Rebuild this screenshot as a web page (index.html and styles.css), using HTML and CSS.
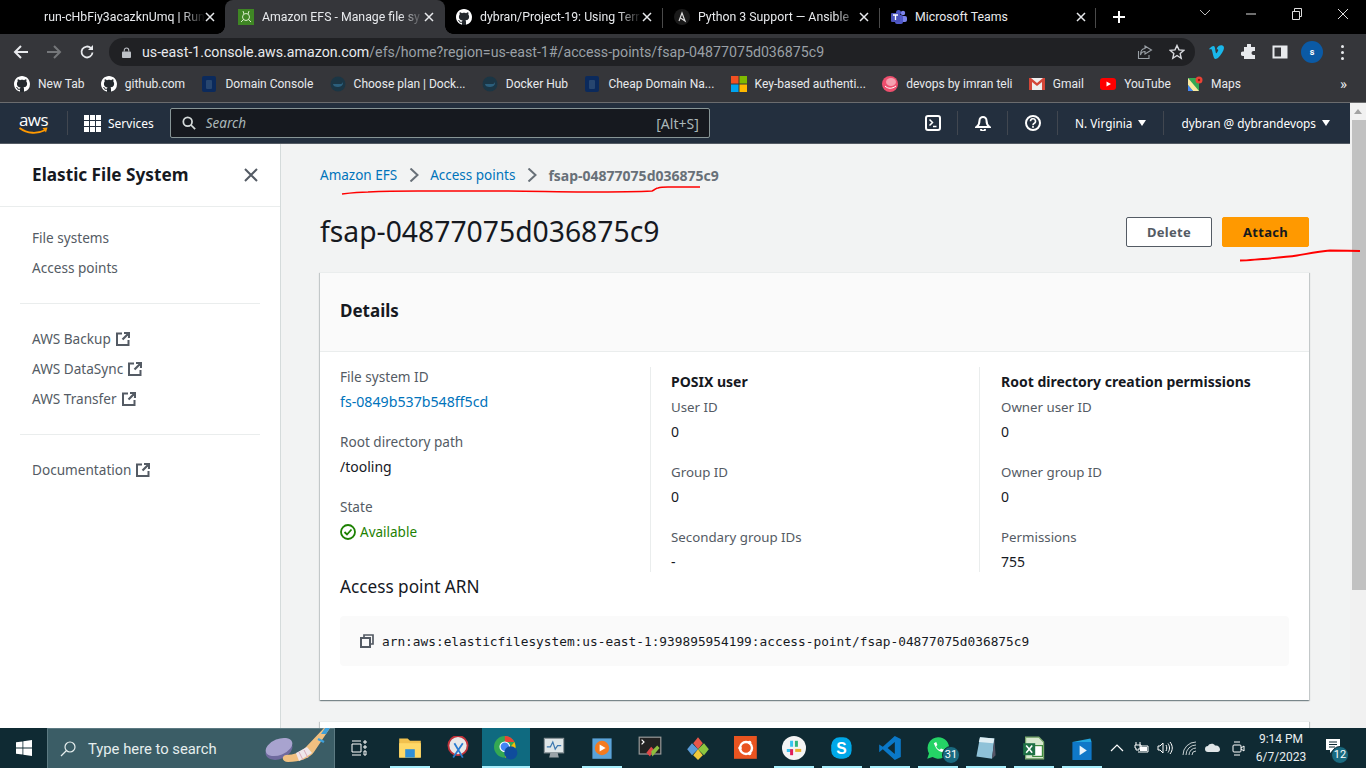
FILE: index.html
```html
<!DOCTYPE html>
<html lang="en">
<head>
    <meta charset="UTF-8">
    <meta name="viewport" content="width=device-width, initial-scale=1.0">
    <title>Amazon EFS - Manage file systems</title>
    <link rel="stylesheet" href="styles.css">
</head>
<body>
    <svg class="sprites" width="0" height="0">
        <symbol id="gh" viewBox="0 0 16 16">
            <circle cx="8" cy="8" r="8" fill="#24292e"/>
            <path fill="#fff" d="M8 0C3.58 0 0 3.58 0 8c0 3.54 2.29 6.53 5.47 7.59.4.07.55-.17.55-.38 0-.19-.01-.82-.01-1.49-2.01.37-2.53-.49-2.69-.94-.09-.23-.48-.94-.82-1.13-.28-.15-.68-.52-.01-.53.63-.01 1.08.58 1.23.82.72 1.21 1.87.87 2.33.66.07-.52.28-.87.51-1.07-1.78-.2-3.64-.89-3.64-3.95 0-.87.31-1.59.82-2.15-.08-.2-.36-1.02.08-2.12 0 0 .67-.21 2.2.82.64-.18 1.32-.27 2-.27.68 0 1.36.09 2 .27 1.53-1.04 2.2-.82 2.2-.82.44 1.1.16 1.92.08 2.12.51.56.82 1.27.82 2.15 0 3.07-1.87 3.75-3.65 3.95.29.25.54.73.54 1.48 0 1.07-.01 1.93-.01 2.2 0 .21.15.46.55.38A8.013 8.013 0 0016 8c0-4.42-3.58-8-8-8z"/>
        </symbol>
        <symbol id="x" viewBox="0 0 10 10">
            <path d="M1 1l8 8M9 1L1 9" stroke="currentColor" stroke-width="1.5" fill="none"/>
        </symbol>
        <symbol id="ext" viewBox="0 0 14 14">
            <path d="M6 1.500H1V13h11.500V8" stroke="#545b64" stroke-width="2" fill="none"/>
            <path d="M8 1h5v5M13 1L6.500 7.500" stroke="#545b64" stroke-width="2.200" fill="none"/>
        </symbol>
        <symbol id="ncheap" viewBox="0 0 16 16">
            <rect x="1" y="0" width="14" height="16" rx="2" fill="#0b2a5c"/>
            <rect x="5" y="4" width="6" height="9" rx="1" fill="#27466f"/>
        </symbol>
        <symbol id="docker" viewBox="0 0 16 16">
            <circle cx="8" cy="8" r="7.500" fill="#1b3645"/>
            <path d="M3 8h8c1 0 1.500-1 2-2 .5 2-1 5-5 5-3 0-5-1-5-3z" fill="#2c5f7c"/>
        </symbol>
    </svg>

    <div class="tabstrip">
        <div class="tab">
            <span class="tab-title">run-cHbFiy3acazknUmq | Run</span>
            <svg class="tab-close"><use href="#x"/></svg>
        </div>
        <div class="tab active">
            <svg class="tab-icon" viewBox="0 0 16 16">
                <rect width="16" height="16" fill="#3f8624"/>
                <circle cx="8" cy="8" r="3.500" fill="none" stroke="#d6ecc8" stroke-width="1"/>
                <path d="M5 2l1 3M11 2l-1 3M3 13l3-3M13 13l-3-3" stroke="#d6ecc8" stroke-width="1"/>
            </svg>
            <span class="tab-title">Amazon EFS - Manage file sy</span>
            <svg class="tab-close"><use href="#x"/></svg>
        </div>
        <div class="tab after-active">
            <svg class="tab-icon"><use href="#gh"/></svg>
            <span class="tab-title">dybran/Project-19: Using Terr</span>
            <svg class="tab-close"><use href="#x"/></svg>
        </div>
        <div class="tab sep">
            <svg class="tab-icon" viewBox="0 0 16 16">
                <circle cx="8" cy="8" r="8" fill="#1a1a1a"/>
                <path d="M5 12L8 4l3 8-4.500-3" stroke="#ddd" stroke-width="1.200" fill="none"/>
            </svg>
            <span class="tab-title">Python 3 Support — Ansible</span>
            <svg class="tab-close"><use href="#x"/></svg>
        </div>
        <div class="tab sep last">
            <svg class="tab-icon" viewBox="0 0 16 16">
                <circle cx="12" cy="4" r="2.200" fill="#7b83eb"/>
                <rect x="9" y="7" width="7" height="6" rx="2" fill="#7b83eb"/>
                <circle cx="7.500" cy="3.500" r="2.500" fill="#5059c9"/>
                <rect x="4" y="6" width="8" height="9" rx="2" fill="#5059c9"/>
                <rect x="0" y="4" width="9" height="9" rx="1" fill="#4b53bc"/>
                <path d="M2 6h5M4.500 6v5" stroke="#fff" stroke-width="1.300"/>
            </svg>
            <span class="tab-title plain">Microsoft Teams</span>
            <svg class="tab-close"><use href="#x"/></svg>
        </div>
        <svg class="new-tab" viewBox="0 0 12 12"><path d="M6 0v12M0 6h12" stroke="#fff" stroke-width="2"/></svg>
        <div class="win-controls">
            <svg viewBox="0 0 46 20"><path d="M18 6l5 5 5-5" stroke="#bbb" fill="none"/></svg>
            <svg viewBox="0 0 46 20"><path d="M18 10h10" stroke="#ddd" fill="none"/></svg>
            <svg viewBox="0 0 46 20"><path d="M18.500 7.500h7v8h-7zM20.500 7.500v-3h7v8h-2" stroke="#ddd" fill="none"/></svg>
            <svg viewBox="0 0 46 20"><path d="M18 5l10 10M28 5L18 15" stroke="#ddd" fill="none"/></svg>
        </div>
    </div>

    <div class="toolbar">
        <svg class="tool-btn" viewBox="0 0 16 16"><path d="M15 8H2M8 2L2 8l6 6" stroke="#e8eaed" stroke-width="2" fill="none"/></svg>
        <svg class="tool-btn" viewBox="0 0 16 16"><path d="M1 8h13M8 2l6 6-6 6" stroke="#75777a" stroke-width="2" fill="none"/></svg>
        <svg class="tool-btn" viewBox="0 0 16 16"><path d="M13.500 8.500A5.500 5.500 0 1 1 12 4.200" stroke="#e8eaed" stroke-width="1.800" fill="none"/><path d="M14 1v5H9z" fill="#e8eaed"/></svg>
        <div class="omnibox">
            <svg class="lock" viewBox="0 0 10 12"><path d="M2.500 5V3.500a2.500 2.500 0 0 1 5 0V5" stroke="#bdc1c6" fill="none" stroke-width="1.200"/><rect y="5" width="10" height="7" rx="1" fill="#bdc1c6"/></svg>
            <span class="url"><span class="host">us-east-1.console.aws.amazon.com</span>/efs/home?region=us-east-1#/access-points/fsap-04877075d036875c9</span>
            <svg class="omni-icon" viewBox="0 0 16 16"><path d="M1.500 7v7.500H12V11M8 2v0l6.500 4L8 10V7.500C5.500 7.500 4 9 3.500 11 3.500 7 5 4.500 8 4.500z" stroke="#9aa0a6" fill="none" stroke-width="1.100"/></svg>
            <svg class="omni-icon" viewBox="0 0 16 16"><path d="M8 1.500l2 4.400 4.700.5-3.500 3.200 1 4.700L8 11.500l-4.200 2.800 1-4.700L1.300 6.400 6 5.900z" stroke="#dadce0" fill="none" stroke-width="1.400"/></svg>
        </div>
        <svg class="ext-icon" viewBox="0 0 16 16"><path d="M0 5c2-2 3-3 4.500-3 2 0 1.500 5 2.500 7 .5 1 1-.5 2-2 .7-1.500-.5-2-1.500-1.500C8.500 2 11 .8 13.500 1.500 16 2.500 15 6 13 9c-2 3-4.500 6-6.500 6S4 10 3 6.500C2.500 5 2 4.500 1 5.500z" fill="#1ab7ea"/></svg>
        <svg class="ext-icon" viewBox="0 0 16 16"><path d="M6 1a2 2 0 0 1 4 0v2h4v4h-1.500a2 2 0 0 0 0 4H14v4H3v-3H2a2.200 2.200 0 0 1 0-4.500h1V3h3z" fill="#e8eaed"/></svg>
        <svg class="ext-icon" viewBox="0 0 16 16"><path d="M1.500 2.500h13v11h-13z" fill="none" stroke="#e8eaed" stroke-width="2"/><rect x="9" y="3" width="5" height="10" fill="#e8eaed"/></svg>
        <span class="avatar">s</span>
        <span class="kebab"><i></i><i></i><i></i></span>
    </div>

    <div class="bookmarks">
        <span class="bm"><svg class="bm-icon"><use href="#gh"/></svg>New Tab</span>
        <span class="bm"><svg class="bm-icon"><use href="#gh"/></svg>github.com</span>
        <span class="bm"><svg class="bm-icon"><use href="#ncheap"/></svg>Domain Console</span>
        <span class="bm"><svg class="bm-icon"><use href="#docker"/></svg>Choose plan | Dock...</span>
        <span class="bm"><svg class="bm-icon"><use href="#docker"/></svg>Docker Hub</span>
        <span class="bm"><svg class="bm-icon"><use href="#ncheap"/></svg>Cheap Domain Na...</span>
        <span class="bm"><svg class="bm-icon" viewBox="0 0 16 16"><rect width="7.500" height="7.500" fill="#f25022"/><rect x="8.500" width="7.500" height="7.500" fill="#7fba00"/><rect y="8.500" width="7.500" height="7.500" fill="#00a4ef"/><rect x="8.500" y="8.500" width="7.500" height="7.500" fill="#ffb900"/></svg>Key-based authenti...</span>
        <span class="bm"><svg class="bm-icon" viewBox="0 0 16 16"><circle cx="8" cy="8" r="8" fill="#ef4f6e"/><ellipse cx="9" cy="6" rx="5" ry="4" fill="#f6a0b0"/><path d="M3 10c3 3 7 3 11 0" stroke="#fff" fill="none"/></svg>devops by imran teli</span>
        <span class="bm"><svg class="bm-icon" viewBox="0 0 16 16"><rect y="2" width="16" height="12" fill="#eee"/><path d="M0 2v12h3V6l5 4 5-4v8h3V2h-2L8 7 2 2z" fill="#d44638"/></svg>Gmail</span>
        <span class="bm"><svg class="bm-icon" viewBox="0 0 16 16"><rect y="2" width="16" height="12" rx="3" fill="#f00"/><path d="M6.500 5.500v5L11 8z" fill="#fff"/></svg>YouTube</span>
        <span class="bm"><svg class="bm-icon" viewBox="0 0 16 16"><path d="M1 2h11v13H1z" fill="#34a853"/><path d="M1 2l11 13H6L1 9z" fill="#fbe9a0"/><path d="M1 9l5 6H1z" fill="#4285f4"/><circle cx="12" cy="4" r="3.500" fill="#ea4335"/><circle cx="12" cy="4" r="1.200" fill="#8e1a10"/></svg>Maps</span>
        <span class="bm-more">»</span>
    </div>

    <div class="viewport">
        <div class="console">
            <nav class="awsbar">
                <div class="aws-logo">
                    <span>aws</span>
                    <svg viewBox="0 0 30 8"><path d="M1 1c8 6 18 6 26 2" stroke="#f90" stroke-width="1.800" fill="none"/><path d="M24 1l5-.5-1.500 5z" fill="#f90"/></svg>
                </div>
                <span class="nav-sep first"></span>
                <span class="grid-icon"><i></i><i></i><i></i><i></i><i></i><i></i><i></i><i></i><i></i></span>
                <span class="nav-label services">Services</span>
                <div class="search">
                    <svg viewBox="0 0 16 16"><circle cx="6.500" cy="6.500" r="5" stroke="#d5dbdb" stroke-width="2" fill="none"/><path d="M10 10l5 5" stroke="#d5dbdb" stroke-width="2"/></svg>
                    <span class="search-text">Search</span>
                    <span class="search-key">[Alt+S]</span>
                </div>
                <div class="nav-right">
                    <span class="nav-item"><svg viewBox="0 0 16 16"><rect x="1" y="1" width="14" height="14" rx="2" stroke="#fff" stroke-width="2" fill="none"/><path d="M4.500 4.500l3 3-3 3M8 11.500h3.500" stroke="#fff" stroke-width="1.500" fill="none"/></svg></span>
                    <span class="nav-item"><svg viewBox="0 0 16 16"><path d="M8 2a3.500 3.500 0 0 0-3.500 3.500c0 3-1 5-3 6.500h13c-2-1.500-3-3.500-3-6.500A3.500 3.500 0 0 0 8 2zM6 14a2 2 0 0 0 4 0" stroke="#fff" stroke-width="2" fill="none"/></svg></span>
                    <span class="nav-item"><svg viewBox="0 0 16 16"><circle cx="8" cy="8" r="7" stroke="#fff" stroke-width="2" fill="none"/><path d="M5.500 6.200a2.500 2.500 0 1 1 3.500 2.300c-.7.400-1 .8-1 1.700" stroke="#fff" stroke-width="1.600" fill="none"/><rect x="7.200" y="11" width="1.600" height="1.800" fill="#fff"/></svg></span>
                    <span class="nav-item text region">N. Virginia<i class="caret"></i></span>
                    <span class="nav-item text account">dybran @ dybrandevops<i class="caret"></i></span>
                </div>
            </nav>

            <div class="layout">
                <aside class="sidenav">
                    <div class="side-head">
                        <h2>Elastic File System</h2>
                        <svg class="side-close" viewBox="0 0 14 14"><path d="M1 1l12 12M13 1L1 13" stroke="#545b64" stroke-width="2"/></svg>
                    </div>
                    <ul class="side-list top">
                        <li>File systems</li>
                        <li>Access points</li>
                    </ul>
                    <hr class="side-div">
                    <ul class="side-list">
                        <li>AWS Backup<svg class="ext"><use href="#ext"/></svg></li>
                        <li>AWS DataSync<svg class="ext"><use href="#ext"/></svg></li>
                        <li>AWS Transfer<svg class="ext"><use href="#ext"/></svg></li>
                    </ul>
                    <hr class="side-div">
                    <ul class="side-list">
                        <li>Documentation<svg class="ext"><use href="#ext"/></svg></li>
                    </ul>
                </aside>

                <main class="content">
                    <div class="crumbs">
                        <a>Amazon EFS</a>
                        <svg viewBox="0 0 10 14"><path d="M1.500.5l7 6.500-7 6.500" stroke="#687078" stroke-width="2" fill="none"/></svg>
                        <a>Access points</a>
                        <svg viewBox="0 0 10 14"><path d="M1.500.5l7 6.500-7 6.500" stroke="#687078" stroke-width="2" fill="none"/></svg>
                        <strong>fsap-04877075d036875c9</strong>
                    </div>
                    <div class="page-head">
                        <h1>fsap-04877075d036875c9</h1>
                        <div class="actions">
                            <button class="btn">Delete</button>
                            <button class="btn primary">Attach</button>
                        </div>
                    </div>
                    <section class="card">
                        <h2 class="card-head">Details</h2>
                        <div class="card-body">
                            <div class="columns">
                                <div class="col">
                                    <div class="field"><span>File system ID</span><a>fs-0849b537b548ff5cd</a></div>
                                    <div class="field"><span>Root directory path</span><b>/tooling</b></div>
                                    <div class="field"><span>State</span>
                                        <em class="status"><svg viewBox="0 0 16 16"><circle cx="8" cy="8" r="7" stroke="#1d8102" stroke-width="1.800" fill="none"/><path d="M4.500 8l2.500 2.500 4.500-5" stroke="#1d8102" stroke-width="1.800" fill="none"/></svg>Available</em>
                                    </div>
                                </div>
                                <div class="col titled">
                                    <h3>POSIX user</h3>
                                    <div class="field"><span>User ID</span><b>0</b></div>
                                    <div class="field"><span>Group ID</span><b>0</b></div>
                                    <div class="field"><span>Secondary group IDs</span><b>-</b></div>
                                </div>
                                <div class="col titled">
                                    <h3>Root directory creation permissions</h3>
                                    <div class="field"><span>Owner user ID</span><b>0</b></div>
                                    <div class="field"><span>Owner group ID</span><b>0</b></div>
                                    <div class="field"><span>Permissions</span><b>755</b></div>
                                </div>
                            </div>
                            <h2 class="arn-title">Access point ARN</h2>
                            <div class="arn-box">
                                <svg viewBox="0 0 14 14"><path d="M4 4V1h9v9h-3" stroke="#545b64" stroke-width="1.700" fill="none"/><rect x="1" y="4" width="9" height="9" stroke="#545b64" stroke-width="2" fill="none"/></svg>
                                <code>arn:aws:elasticfilesystem:us-east-1:939895954199:access-point/fsap-04877075d036875c9</code>
                            </div>
                        </div>
                    </section>
                    <section class="card next"></section>
                </main>
            </div>
        </div>
        <div class="scrollbar">
            <span class="scroll-up"></span>
            <span class="scroll-thumb"></span>
        </div>
    </div>

    <div class="taskbar">
        <svg class="start" viewBox="0 0 16 16"><path d="M0 2.300l6.500-.9v6.200H0zM7.300 1.300L16 0v7.600H7.300zM0 8.400h6.500v6.200L0 13.700zM7.300 8.400H16V16l-8.700-1.200z" fill="#fff"/></svg>
        <div class="task-search">
            <svg viewBox="0 0 16 16"><circle cx="10" cy="6" r="5" stroke="#e6eeee" fill="none" stroke-width="1.200"/><path d="M6.500 9.500L1 15" stroke="#e6eeee" stroke-width="1.200"/></svg>
            <span>Type here to search</span>
            <svg class="hockey" viewBox="0 0 66 38">
                <ellipse cx="14" cy="22" rx="14" ry="9" transform="rotate(-22 14 22)" fill="#6f6a9e"/>
                <ellipse cx="14" cy="19" rx="14" ry="8" transform="rotate(-22 14 19)" fill="#a8a3cf"/>
                <path d="M59 0h6L49 24c-4 6-14 10-26 10-6 0-7-6-2-7 8 0 15-3 20-8z" fill="#f0c080"/>
                <path d="M31 25l11-6 5 6-13 8z" fill="#efe6ea"/>
                <path d="M34 24l4 8M39 22l4 8" stroke="#d9a8b8"/>
                <path d="M60 0h5l-4 6h-5z" fill="#3f9fd8"/>
                <path d="M53 11l6 3" stroke="#3f9fd8" stroke-width="2.500"/>
            </svg>
        </div>
        <svg class="task-view" viewBox="0 0 16 16"><path d="M1 1h9M1 15h9M1 4h9v8H1zM13 1h2v2h-2zM13 6h2v2h-2zM13 11h2v4h-2z" stroke="#fff" fill="none"/></svg>
        <div class="task-apps">
            <span class="task-app open"><svg viewBox="0 0 20 20"><path d="M1 2h7l2 2h9v14H1z" fill="#f2c14e"/><rect x="1" y="6" width="18" height="12" fill="#ffd968"/><rect x="6" y="11" width="8" height="7" fill="#2f8fd8"/></svg></span>
            <span class="task-app"><svg viewBox="0 0 20 20"><circle cx="10" cy="8" r="8" fill="#e8e8e8" stroke="#c0323a" stroke-width="1.500"/><path d="M6 18l8-12M14 18L7 6" stroke="#2a7bd0" stroke-width="1.500"/></svg></span>
            <span class="task-app open active"><svg viewBox="0 0 20 20"><circle cx="9" cy="9" r="9" fill="#34a853"/><path d="M9 0a9 9 0 0 1 8 5H9z" fill="#ea4335"/><path d="M17 5a9 9 0 0 1-8 13l4-8z" fill="#fbbc05"/><circle cx="9" cy="9" r="4" fill="#4285f4" stroke="#fff"/><circle cx="14" cy="14" r="5.500" fill="#0f4c9c"/></svg></span>
            <span class="task-app"><svg viewBox="0 0 20 20"><rect x="2" y="2" width="16" height="12" fill="#dfe6e8" stroke="#8a9499"/><path d="M4 9h3l2-4 2 6 2-3h3" stroke="#3c78b0" fill="none"/><path d="M7 14h6l1 4H6z" fill="#9aa3a8"/></svg></span>
            <span class="task-app open"><svg viewBox="0 0 20 20"><rect x="2" y="2" width="16" height="17" fill="#5ba3d9"/><circle cx="10" cy="10" r="6" fill="#f47b20"/><path d="M8 7v6l5-3z" fill="#fff"/></svg></span>
            <span class="task-app"><svg viewBox="0 0 20 20"><rect x="1" y="1" width="18" height="14" fill="#222" stroke="#999"/><path d="M3 3l2 2-2 2" stroke="#fff" fill="none"/><path d="M7 14l4-5 2 2-3 6z" fill="#e04848"/><path d="M12 17l6-7-2-2-5 5z" fill="#8dbf3f"/></svg></span>
            <span class="task-app"><svg viewBox="0 0 20 20"><path d="M10 1l4 5-4 5-4-5z" fill="#e8574a"/><path d="M5 6l5 5-5 5-4-5z" fill="#5a9bd8"/><path d="M15 6l4 5-4 5-5-5z" fill="#8dc63f"/><path d="M10 11l4 5-4 4-4-4z" fill="#f0c83c"/></svg></span>
            <span class="task-app"><svg viewBox="0 0 20 20"><rect width="19" height="19" fill="#e95420"/><circle cx="10" cy="10" r="5" fill="none" stroke="#fff" stroke-width="2"/><circle cx="5" cy="10" r="1.500" fill="#fff"/><circle cx="13" cy="5.500" r="1.500" fill="#fff"/><circle cx="13" cy="14.500" r="1.500" fill="#fff"/></svg></span>
            <span class="task-app open"><svg viewBox="0 0 20 20"><circle cx="10" cy="10" r="10" fill="#f4f4f4"/><path d="M8 4v5M4 12h5" stroke="#36c5f0" stroke-width="2.500"/><path d="M12 4v5" stroke="#2eb67d" stroke-width="2.500"/><path d="M11 12h5" stroke="#ecb22e" stroke-width="2.500"/><path d="M8 11v5" stroke="#e01e5a" stroke-width="2.500"/></svg></span>
            <span class="task-app open"><svg viewBox="0 0 20 20"><rect x="1" y="1" width="17" height="18" rx="7" fill="#00a8e8"/><text x="9.500" y="15" text-anchor="middle" font-size="13" font-family="Liberation Sans" font-weight="700" fill="#fff">S</text></svg></span>
            <span class="task-app open"><svg viewBox="0 0 20 20"><path d="M14 0l5 2.500v15L14 20 4 11l-3 2.500V7L4 9z" fill="#0a78c8"/><path d="M14 5L8 10l6 5z" fill="#0f2a33"/></svg></span>
            <span class="task-app open"><svg viewBox="0 0 20 20"><path d="M10 1a9 9 0 0 0-7.500 13.500L1 19l4.500-1.400A9 9 0 1 0 10 1z" fill="#25d366"/><path d="M6.500 6c2 5 3.500 6.500 7.500 7.500l1-2-2.500-1-1 1c-1.500-.5-2.500-1.500-3-3l1-1-1-2.500z" fill="#fff"/></svg><span class="task-badge">31</span></span>
            <span class="task-app open"><svg viewBox="0 0 20 20"><path d="M5 1l12 1-2 17-13-2z" fill="#8fc2d8"/><path d="M5 1l12 1-1 4L4 5z" fill="#dfeef3"/><path d="M15 19l2-17 1 14z" fill="#556"/></svg></span>
            <span class="task-app open"><svg viewBox="0 0 20 20"><path d="M3 1h11l4 4v14H3z" fill="#d7e8cf" stroke="#7aa96c"/><rect x="9" y="8" width="8" height="9" fill="#fff" stroke="#3f8a3f"/><rect x="1" y="6" width="10" height="10" fill="#1e7145"/><path d="M3.500 8l5 6M8.500 8l-5 6" stroke="#fff" stroke-width="1.300"/></svg></span>
            <span class="task-app open"><svg viewBox="0 0 20 20"><path d="M2 5l15-3 1 3z" fill="#22a7e0"/><rect x="2" y="5" width="16" height="15" fill="#0f78c8"/><path d="M8 8v8l6-4z" fill="#e8f4fb"/></svg></span>
        </div>
        <div class="tray">
            <svg viewBox="0 0 16 16"><path d="M2 11l6-6 6 6" stroke="#fff" fill="none" stroke-width="1.200"/></svg>
            <svg viewBox="0 0 16 16"><path d="M3 2v3M7 2v3M2 5h6v3H6v2H3V8H2zM6 6h9v6H5" stroke="#fff" fill="none"/><rect x="7" y="7" width="7" height="4" fill="#fff"/></svg>
            <svg viewBox="0 0 16 16"><path d="M1 6h2l3-3v10l-3-3H1zM9 5c1 2 1 4 0 6M11 3.500c2 3 2 6 0 9M13 2c3 4 3 8 0 12" stroke="#fff" fill="none"/></svg>
            <svg viewBox="0 0 16 16"><path d="M2 15A13 13 0 0 1 15 2M5 15A10 10 0 0 1 15 5M8 15a7 7 0 0 1 7-7M11 15a4 4 0 0 1 4-4" stroke="#c5ced0" fill="none"/></svg>
            <svg viewBox="0 0 16 16"><path d="M3 12a3 3 0 0 1 0-6c1-3 6-3 7-.5 3-.5 5 1.500 5 4 0 1.500-1 2.500-2.500 2.500z" fill="#dfe5e7"/></svg>
            <svg viewBox="0 0 16 16"><rect x="4" y="5" width="8" height="7" rx="1" stroke="#fff" fill="none"/><path d="M12 8l3-2v5l-3-2M5 2h6M5 15h6" stroke="#fff" fill="none"/></svg>
        </div>
        <div class="clock"><span>9:14 PM</span><span>6/7/2023</span></div>
        <div class="notif">
            <svg viewBox="0 0 16 16"><path d="M1 1h14v11H8l-3 3v-3H1z" fill="#fff"/><path d="M4 4h8M4 6.500h8M4 9h6" stroke="#0f2a33"/></svg>
            <span class="task-badge">12</span>
        </div>
    </div>

    <!-- red marker strokes drawn over the screenshot -->
    <svg class="marker" viewBox="0 0 1366 768">
        <path d="M342 194c8-1 16-2 26-2 20-1 35-1 50-1 30 0 55 0 84 0 30 0 55 1 83 1 25 0 50 0 67-1 3-1 4-3 6-3 3-1 6-1 10-1 12 0 22 0 32 0" stroke="#f00" stroke-width="1.500" fill="none"/>
        <path d="M1240 260.500c8 0 15-1 23-1.500 12-1 24-2 34-3.500 12-2 22-4 33-5 10 0 20 0 30 .5" stroke="#f00" stroke-width="1.800" fill="none"/>
    </svg>
</body>
</html>
```

FILE: styles.css
```css
* {
    margin: 0;
    padding: 0;
    box-sizing: border-box;
}

html, body {
    width: 100%;
    height: 100%;
    overflow: hidden;
}

body {
    display: flex;
    flex-direction: column;
    font-family: "Noto Sans", Arial, sans-serif;
    font-size: 14px;
    color: #16191f;
}

.sprites {
    position: absolute;
}

/* Browser chrome */
.tabstrip {
    height: 34px;
    background: #000;
    display: flex;
    align-items: center;
    padding-left: 8px;
    flex: none;
}

.tab {
    width: 217px;
    height: 34px;
    padding: 0 10px 0 12px;
    display: flex;
    align-items: center;
    color: #e8eaed;
    font: 12.3px Roboto, Arial, sans-serif;
    position: relative;
    flex: none;
}

.tab:first-child {
    padding-left: 36px;
}

.tab.active {
    width: 220px;
    padding: 0 11px 0 13px;
    background: #35363a;
    border-radius: 8px 8px 0 0;
}

.tab.after-active {
    padding-left: 11px;
}

/* little flares at the foot of the active tab */
.tab.active::before, .tab.active::after {
    content: "";
    position: absolute;
    bottom: 0;
    width: 8px;
    height: 8px;
}

.tab.active::before {
    left: -8px;
    background: radial-gradient(circle at 0 0, #000 7.5px, #35363a 8px);
}

.tab.active::after {
    right: -8px;
    background: radial-gradient(circle at 100% 0, #000 7.5px, #35363a 8px);
}

.tab.sep::before {
    content: "";
    position: absolute;
    left: 0;
    top: 8px;
    height: 20px;
    width: 1px;
    background: #4a4a4a;
}

.tab.last::after {
    content: "";
    position: absolute;
    right: 0;
    top: 8px;
    height: 20px;
    width: 1px;
    background: #4a4a4a;
}

.tab-icon {
    width: 16px;
    height: 16px;
    margin-right: 8px;
    flex: none;
}

.tab-title {
    flex: 1;
    white-space: nowrap;
    -webkit-mask-image: linear-gradient(to right, #000 85%, transparent);
    mask-image: linear-gradient(to right, #000 85%, transparent);
}

.tab-title.plain {
    -webkit-mask-image: none;
    mask-image: none;
}

.tab-close {
    width: 10px;
    height: 10px;
    flex: none;
    color: #e8eaed;
}

.new-tab {
    width: 12px;
    height: 12px;
    margin-left: 17px;
    flex: none;
}

.win-controls {
    margin-left: auto;
    display: flex;
    align-items: center;
    padding-bottom: 6px;
}

.win-controls svg {
    width: 46px;
    height: 20px;
}

.toolbar {
    height: 33px;
    padding: 3px 0 0 13px;
    background: #35363a;
    display: flex;
    align-items: center;
    flex: none;
}

.tool-btn {
    width: 16px;
    height: 16px;
    margin-right: 17px;
    flex: none;
}

.omnibox {
    width: 1086px;
    height: 28px;
    margin-left: -3px;
    background: #202124;
    border-radius: 14px;
    display: flex;
    align-items: center;
    padding: 0 10px 0 13px;
    font: 14.2px Roboto, Arial, sans-serif;
    color: #9aa0a6;
    flex: none;
}

.lock {
    width: 9px;
    height: 11px;
    margin-right: 11px;
}

.url {
    flex: 1;
    white-space: nowrap;
}

.host {
    color: #e8eaed;
}

.omni-icon {
    width: 16px;
    height: 16px;
    margin-left: 16px;
}

.ext-icon {
    width: 16px;
    height: 16px;
    margin-left: 16px;
    flex: none;
}

.ext-icon:last-of-type {
    margin-left: 15px;
}

.omnibox + .ext-icon {
    margin-left: 14px;
}

.avatar {
    width: 22px;
    height: 22px;
    border-radius: 50%;
    margin-left: 13px;
    background: #0b5aa5;
    color: #fff;
    font: 700 9px/22px Roboto, sans-serif;
    text-align: center;
}

.kebab {
    margin-left: 18px;
    display: flex;
    flex-direction: column;
    gap: 3px;
}

.kebab i {
    width: 3px;
    height: 3px;
    background: #e8eaed;
    border-radius: 50%;
}

.bookmarks {
    height: 36px;
    padding: 0 0 2px 14px;
    background: #35363a;
    border-bottom: 1px solid #6b6c6e;
    display: flex;
    align-items: center;
    gap: 16.3px;
    color: #e8eaed;
    font: 12px Roboto, Arial, sans-serif;
    flex: none;
}

.bm {
    display: flex;
    align-items: center;
    white-space: nowrap;
}

.bm-icon {
    width: 16px;
    height: 16px;
    margin-right: 8px;
    flex: none;
}

.bm-more {
    margin-left: auto;
    margin-right: 19px;
    font-size: 15px;
}

/* Page area with the scrollbar */
.viewport {
    flex: 1;
    display: flex;
    min-height: 0;
}

.console {
    flex: 1;
    display: flex;
    flex-direction: column;
    min-width: 0;
}

.scrollbar {
    width: 16px;
    background: #f1f1f1;
    display: flex;
    flex-direction: column;
    align-items: center;
    flex: none;
}

.scroll-up {
    margin-top: 6px;
    border-left: 4px solid transparent;
    border-right: 4px solid transparent;
    border-bottom: 5px solid #a3a3a3;
}

.scroll-thumb {
    width: 14px;
    height: 470px;
    margin-top: 6px;
    background: #c1c1c1;
    margin-left: 2px;
}

.awsbar {
    height: 41px;
    background: #232f3e;
    border-bottom: 1px solid #545b64;
    color: #fff;
    display: flex;
    align-items: center;
    padding-left: 18px;
    flex: none;
}

.aws-logo {
    width: 31px;
    height: 22px;
    font: 400 17px/15px "Open Sans", sans-serif;
    text-align: center;
    letter-spacing: -0.5px;
}

.aws-logo span {
    display: block;
}

.aws-logo svg {
    display: block;
    width: 31px;
    height: 8px;
}

.nav-sep {
    width: 1px;
    height: 24px;
    background: #414750;
}

.nav-sep.first {
    margin-left: 18px;
}

.grid-icon {
    margin-left: 16px;
    display: grid;
    grid-template-columns: repeat(3, 5px);
    grid-auto-rows: 5px;
    gap: 1px;
}

.grid-icon i {
    background: #fff;
}

.nav-label {
    font-size: 12px;
}

.services {
    margin-left: 7px;
}

.search {
    width: 540px;
    height: 30px;
    margin-left: 16px;
    background: #16191f;
    border: 1px solid #879596;
    border-radius: 2px;
    display: flex;
    align-items: center;
    padding: 0 10px 0 11px;
    font-size: 13.5px;
    color: #aab7b8;
}

.search svg {
    width: 14px;
    height: 14px;
    margin-right: 10px;
}

.search-text {
    flex: 1;
    font-style: italic;
}

.search-key {
    font-size: 14px;
}

.nav-right {
    margin-left: auto;
    display: flex;
    align-items: center;
    font-size: 11.8px;
}

.nav-item {
    height: 24px;
    display: flex;
    align-items: center;
    justify-content: center;
    width: 50px;
    border-right: 1px solid #414750;
    flex: none;
}

.nav-item svg {
    width: 16px;
    height: 16px;
}

.nav-item.text {
    width: auto;
    white-space: nowrap;
    padding: 0 17px;
}

.nav-item.account {
    border-right: 0;
    padding-right: 20px;
}

.caret {
    margin-left: 6px;
    border-left: 4.5px solid transparent;
    border-right: 4.5px solid transparent;
    border-top: 6px solid #fff;
}

.layout {
    flex: 1;
    display: flex;
    min-height: 0;
}

/* Side navigation */
.sidenav {
    width: 281px;
    background: #fff;
    border-right: 1px solid #d5dbdb;
    flex: none;
    color: #545b64;
}

.side-head {
    height: 63px;
    border-bottom: 1px solid #eaeded;
    display: flex;
    align-items: center;
    justify-content: space-between;
    padding: 0 22px 1px 32px;
}

.side-head h2 {
    font-size: 17.2px;
    font-weight: 700;
    color: #16191f;
}

.side-close {
    width: 14px;
    height: 14px;
}

.side-list {
    list-style: none;
    padding: 20px 0 20px 32px;
}

.side-list.top {
    padding-top: 16px;
}

.side-list li {
    height: 30px;
    line-height: 30px;
    font-size: 13.6px;
    display: flex;
    align-items: center;
}

.side-div {
    border: 0;
    border-top: 1px solid #eaeded;
    margin: 0 20px;
}

.ext {
    width: 14px;
    height: 14px;
    margin-left: 5px;
}

/* Main content */
.content {
    flex: 1;
    background: #f2f3f3;
    padding: 0 41px 0 39px;
    overflow: hidden;
    min-width: 0;
}

.crumbs {
    height: 62px;
    display: flex;
    align-items: center;
    font-size: 13.5px;
}

.crumbs a {
    color: #0073bb;
}

.crumbs svg {
    width: 10px;
    height: 14px;
    margin: 0 11.5px;
}

.crumbs strong {
    color: #687078;
    font-size: 14px;
    font-weight: 700;
}

.page-head {
    height: 50px;
    display: flex;
    align-items: center;
    justify-content: space-between;
    margin-bottom: 16px;
}

.page-head h1 {
    font-size: 28.3px;
    font-weight: 400;
}

.actions {
    display: flex;
    gap: 10px;
    margin-top: 2px;
}

.btn {
    width: 86px;
    height: 30px;
    background: #fff;
    border: 1px solid #545b64;
    border-radius: 2px;
    color: #545b64;
    font: 700 13px "Noto Sans", sans-serif;
    letter-spacing: 0.3px;
}

.btn.primary {
    width: 87px;
    background: #ff9900;
    border-color: #ff9900;
    color: #16191f;
}

.card {
    background: #fff;
    border-top: 1px solid #eaeded;
    box-shadow: 0 1px 1px 0 rgba(0, 28, 36, 0.3), 1px 1px 1px 0 rgba(0, 28, 36, 0.15), -1px 1px 1px 0 rgba(0, 28, 36, 0.15);
}

.card.next {
    margin-top: 21px;
    height: 40px;
}

.card-head {
    height: 79px;
    line-height: 76px;
    padding-left: 20px;
    background: #fafafa;
    border-bottom: 1px solid #eaeded;
    font-size: 17px;
    font-weight: 700;
}

.card-body {
    padding: 15px 20px 34px;
}

.columns {
    display: grid;
    grid-template-columns: 310px 329px 1fr;
}

.col {
    padding-left: 20px;
    border-left: 1px solid #eaeded;
}

.col:first-child {
    padding-left: 0;
    border-left: 0;
}

.col:last-child {
    padding-left: 21px;
}

.col.titled {
    padding-top: 5px;
}

.col h3 {
    font-size: 14px;
    font-weight: 700;
    line-height: 20px;
    margin-bottom: 5px;
}

.field {
    margin-bottom: 20px;
}

.field:last-child {
    margin-bottom: 0;
}

.field span {
    display: block;
    line-height: 20px;
    font-size: 13.6px;
    color: #545b64;
    margin-bottom: 5px;
}

.col.titled .field span {
    font-size: 13.3px;
}

.field b, .field a, .field em {
    display: flex;
    align-items: center;
    line-height: 20px;
    font-size: 14px;
    font-weight: 400;
    font-style: normal;
}

.field a {
    color: #0073bb;
    font-size: 14.2px;
}

.field em.status {
    color: #1d8102;
    font-size: 13.5px;
}

.status svg {
    width: 16px;
    height: 16px;
    margin-right: 4px;
}

.arn-title {
    font-size: 17.2px;
    font-weight: 400;
    line-height: 24px;
    margin-top: 3px;
}

.arn-box {
    height: 50px;
    margin-top: 17px;
    background: #fafafa;
    border-radius: 4px;
    display: flex;
    align-items: center;
    padding-left: 20px;
}

.arn-box svg {
    width: 14px;
    height: 14px;
    margin-right: 8px;
}

.arn-box code {
    font: 12.8px "DejaVu Sans Mono", monospace;
}

/* Windows taskbar */
.taskbar {
    height: 40px;
    background: #0f2a33;
    display: flex;
    align-items: center;
    color: #fff;
    font: 12px Roboto, Arial, sans-serif;
    flex: none;
}

.start {
    width: 16px;
    height: 16px;
    margin: 0 0 0 16px;
}

.task-search {
    width: 288px;
    height: 40px;
    margin-left: 15px;
    background: #3b5d66;
    border: 1px solid #5c7a82;
    border-width: 1px 1px 0;
    display: flex;
    align-items: center;
    padding-left: 12px;
    font-size: 14.8px;
    color: #e6eeee;
    position: relative;
}

.task-search > svg:first-child {
    width: 16px;
    height: 16px;
    margin-right: 12px;
}

.hockey {
    position: absolute;
    left: 217px;
    top: -1px;
    width: 66px;
    height: 38px;
}

.task-view {
    width: 16px;
    height: 16px;
    margin-left: 16px;
}

.task-apps {
    display: flex;
    margin-left: 19px;
}

.task-app {
    width: 48px;
    height: 40px;
    display: flex;
    align-items: center;
    justify-content: center;
    position: relative;
    flex: none;
}

.task-app svg {
    width: 24px;
    height: 24px;
}

.task-app.active {
    background: #0f6a80;
}

.task-app.open::after {
    content: "";
    position: absolute;
    left: 4px;
    right: 4px;
    bottom: 0;
    height: 2px;
    background: #a6eefc;
}

.task-app.active::after {
    left: 0;
    right: 0;
}

.task-badge {
    position: absolute;
    right: 2px;
    bottom: 4px;
    min-width: 18px;
    height: 18px;
    border-radius: 50%;
    border: 1px solid #0f2a33;
    background: #1a6a80;
    color: #fff;
    font: 11px/16px Roboto, sans-serif;
    text-align: center;
}

.tray {
    display: flex;
    align-items: center;
    gap: 8px;
    margin-left: 3px;
}

.tray svg {
    width: 16px;
    height: 16px;
}

.clock {
    width: 64px;
    margin-left: 4px;
    display: flex;
    flex-direction: column;
    align-items: center;
    gap: 5px;
    line-height: 13px;
    color: #e8eef0;
}

.notif {
    width: 30px;
    height: 40px;
    margin-left: 5px;
    position: relative;
    display: flex;
    align-items: center;
    justify-content: center;
}

.notif svg {
    width: 16px;
    height: 16px;
    margin-bottom: 4px;
}

.notif .task-badge {
    right: -1px;
}

/* Red pen marks */
.marker {
    position: absolute;
    top: 0;
    left: 0;
    width: 1366px;
    height: 768px;
    pointer-events: none;
}
```
